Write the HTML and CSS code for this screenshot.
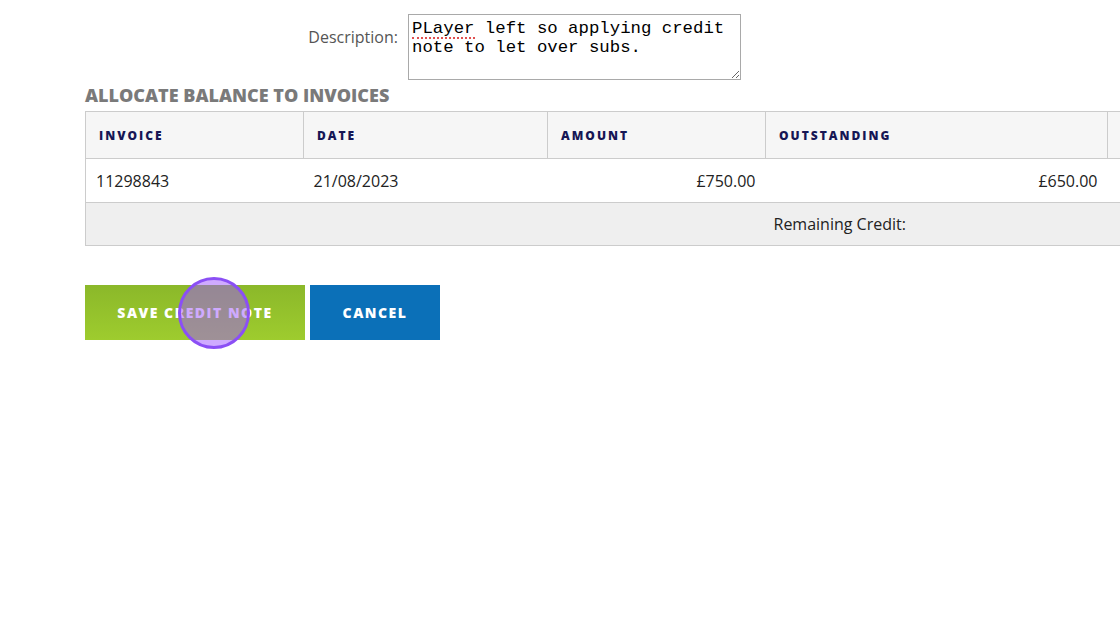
FILE: index.html
```html
<!DOCTYPE html>
<html>
<head>
<meta charset="utf-8">
<link rel="stylesheet" href="styles.css">
</head>
<body>
<div class="page">
  <div class="desc-row">
    <label class="desc-label" for="desc">Description:</label>
    <div class="desc-wrap">
      <textarea id="desc" class="desc-input" spellcheck="false">PLayer left so applying credit note to let over subs.</textarea>
      <span class="spell-mark"></span>
    </div>
  </div>
  <h2 class="section-title">ALLOCATE BALANCE TO INVOICES</h2>
  <table class="alloc">
    <colgroup>
      <col class="c1"><col class="c2"><col class="c3"><col class="c4"><col class="c5">
    </colgroup>
    <thead>
      <tr>
        <th>INVOICE</th>
        <th>DATE</th>
        <th>AMOUNT</th>
        <th>OUTSTANDING</th>
        <th></th>
      </tr>
    </thead>
    <tbody>
      <tr>
        <td>11298843</td>
        <td>21/08/2023</td>
        <td class="num">£750.00</td>
        <td class="num">£650.00</td>
        <td></td>
      </tr>
    </tbody>
    <tfoot>
      <tr>
        <td colspan="3"></td>
        <td colspan="2" class="remaining">Remaining Credit:</td>
      </tr>
    </tfoot>
  </table>
  <div class="actions">
    <button class="btn btn-save">SAVE CREDIT NOTE</button>
    <button class="btn btn-cancel">CANCEL</button>
  </div>
  <div class="click-dot"></div>
</div>
</body>
</html>
```
FILE: styles.css
```css
html, body {
  margin: 0;
  padding: 0;
  background: #fff;
  overflow: hidden;
}
body {
  font-family: "Open Sans", "Liberation Sans", sans-serif;
  color: #222;
}
.page {
  position: relative;
  padding: 14px 0 0 85px;
  height: 612px;
  overflow: hidden;
}
.desc-row {
  display: flex;
  align-items: flex-start;
  gap: 10px;
}
.desc-label {
  width: 313px;
  text-align: right;
  font-size: 16px;
  color: #555;
  padding-top: 12px;
}
.desc-wrap {
  position: relative;
}
.desc-input {
  display: block;
  box-sizing: border-box;
  width: 333px;
  height: 66px;
  margin: 0;
  padding: 4px 3px 2px;
  border: 1px solid #a9a9a9;
  font-family: "Liberation Mono", "Courier New", monospace;
  font-size: 17.35px;
  line-height: 19px;
  color: #000;
  resize: both;
  overflow: hidden;
}
.spell-mark {
  position: absolute;
  left: 4px;
  top: 23px;
  width: 63px;
  height: 0;
  border-bottom: 2px dotted #e05050;
}
.section-title {
  margin: 3px 0 4px;
  font-size: 18px;
  line-height: 24px;
  font-weight: 800;
  color: #7a7a7a;
}
.alloc {
  border-collapse: collapse;
  table-layout: fixed;
  width: 1400px;
}
.alloc .c1 { width: 218px; }
.alloc .c2 { width: 244px; }
.alloc .c3 { width: 218px; }
.alloc .c4 { width: 342px; }
.alloc .c5 { width: 378px; }
.alloc th {
  height: 46px;
  padding: 0 13px;
  background: #f6f6f6;
  border: 1px solid #ccc;
  text-align: left;
  font-size: 12px;
  font-weight: 800;
  letter-spacing: 2px;
  color: #161655;
}
.alloc tbody td {
  height: 43px;
  padding: 0 10px;
  border-top: 1px solid #ccc;
  border-bottom: 1px solid #ccc;
  font-size: 16px;
  color: #222;
}
.alloc tbody td:first-child { border-left: 1px solid #ccc; }
.alloc td.num { text-align: right; }
.alloc tfoot td {
  height: 42px;
  padding: 0 8px;
  background: #efefef;
  border-top: 1px solid #ccc;
  border-bottom: 1px solid #ccc;
  font-size: 16px;
  color: #222;
}
.alloc tfoot td:first-child { border-left: 1px solid #ccc; }
.actions {
  display: flex;
  gap: 5px;
  margin-top: 39px;
}
.btn {
  height: 55px;
  border: none;
  margin: 0;
  padding: 0;
  font-family: "Open Sans", "Liberation Sans", sans-serif;
  font-size: 14px;
  font-weight: 800;
  letter-spacing: 1.5px;
  color: #fff;
}
.btn-save {
  width: 220px;
  background: linear-gradient(#8bb82a, #9ecc2e);
}
.btn-cancel {
  width: 130px;
  background: #0b70b8;
}
.click-dot {
  position: absolute;
  left: 178px;
  top: 277px;
  width: 66px;
  height: 66px;
  border: 3px solid #8b4ff5;
  border-radius: 50%;
  background: rgba(160, 85, 255, 0.5);
}
```
